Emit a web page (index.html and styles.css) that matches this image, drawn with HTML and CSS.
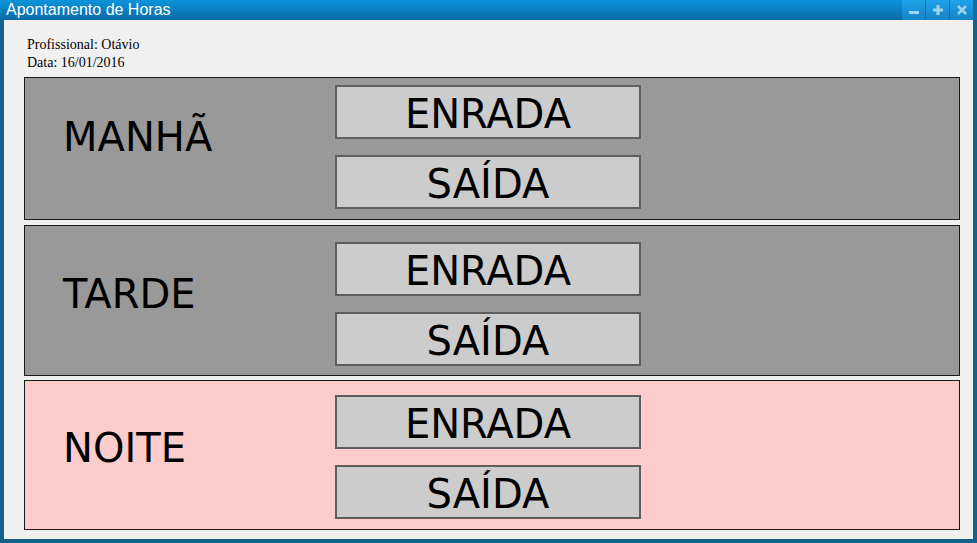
FILE: index.html
```html
<!DOCTYPE html>
<html lang="pt">
<head>
<meta charset="utf-8">
<title>Apontamento de Horas</title>
<link rel="stylesheet" href="styles.css">
</head>
<body>
<div class="window">
  <div class="titlebar">
    <span class="title">Apontamento de Horas</span>
    <div class="controls">
      <span class="ctrl"><svg width="12" height="12" viewBox="0 0 12 12"><rect x="1" y="7" width="10" height="3" fill="#9fd3f2"/></svg></span>
      <span class="ctrl"><svg width="12" height="12" viewBox="0 0 12 12"><rect x="1" y="4.5" width="10" height="3" fill="#9fd3f2"/><rect x="4.5" y="1" width="3" height="10" fill="#9fd3f2"/></svg></span>
      <span class="ctrl"><svg width="12" height="12" viewBox="0 0 12 12"><path d="M2 2 L10 10 M10 2 L2 10" stroke="#9fd3f2" stroke-width="2.6"/></svg></span>
    </div>
  </div>
  <div class="client">
    <div class="info">
      <div>Profissional: Otávio</div>
      <div>Data: 16/01/2016</div>
    </div>
    <section class="panel panel-manha">
      <div class="label label-manha">MANHÃ</div>
      <div class="buttons">
        <div class="btn">ENRADA</div>
        <div class="btn">SAÍDA</div>
      </div>
    </section>
    <section class="panel panel-tarde">
      <div class="label">TARDE</div>
      <div class="buttons">
        <div class="btn">ENRADA</div>
        <div class="btn">SAÍDA</div>
      </div>
    </section>
    <section class="panel panel-noite">
      <div class="label">NOITE</div>
      <div class="buttons">
        <div class="btn">ENRADA</div>
        <div class="btn">SAÍDA</div>
      </div>
    </section>
  </div>
</div>
</body>
</html>
```
FILE: styles.css
```css
* { box-sizing: border-box; }
html, body { margin: 0; padding: 0; }
body { width: 977px; height: 543px; overflow: hidden; background: #14628c; }
.window { width: 977px; height: 543px; display: flex; flex-direction: column; }
.titlebar {
  height: 20px;
  display: flex;
  align-items: center;
  justify-content: space-between;
  background: linear-gradient(#0c93dc, #0b6ba6);
}
.title {
  font-family: "Liberation Sans", Arial, sans-serif;
  font-size: 16px;
  color: #ffffff;
  padding-left: 6px;
  line-height: 20px;
}
.controls { display: flex; height: 20px; padding-right: 4px; gap: 1px; background: #0d6ea8; }
.ctrl {
  width: 23px;
  height: 20px;
  display: flex;
  align-items: center;
  justify-content: center;
  background: linear-gradient(#20a2e8, #1683c6);
}
.client {
  flex: 1;
  background: #f0f0f0;
  margin: 0 4px 4px 4px;
  padding: 16px 13px 0 20px;
  display: flex;
  flex-direction: column;
}
.info {
  font-family: "Liberation Serif", "Times New Roman", serif;
  font-size: 14px;
  line-height: 18px;
  color: #000;
  padding-left: 3px;
  margin-bottom: 5px;
}
.panel {
  border: 1px solid #1a1a1a;
  background: #999999;
  display: grid;
  grid-template-columns: 310px 306px;
  align-items: start;
}
.panel-manha { height: 143px; padding-top: 7px; }
.panel-tarde { height: 151px; padding-top: 16px; margin-top: 5px; }
.panel-noite { height: 150px; padding-top: 14px; margin-top: 4px; background: #ffcccc; }
.label {
  align-self: center;
  font-family: "DejaVu Sans", Verdana, sans-serif;
  font-size: 40px;
  line-height: 40px;
  color: #000;
  padding-left: 38px;
  padding-bottom: 29px;
}
.label-manha { padding-bottom: 31px; }
.buttons { display: flex; flex-direction: column; gap: 16px; }
.btn {
  height: 54px;
  border: 2px solid #5e5e5e;
  background: #cccccc;
  display: flex;
  align-items: center;
  justify-content: center;
  padding-top: 3px;
  font-family: "DejaVu Sans", Verdana, sans-serif;
  font-size: 40px;
  line-height: 40px;
  color: #000;
}
```
